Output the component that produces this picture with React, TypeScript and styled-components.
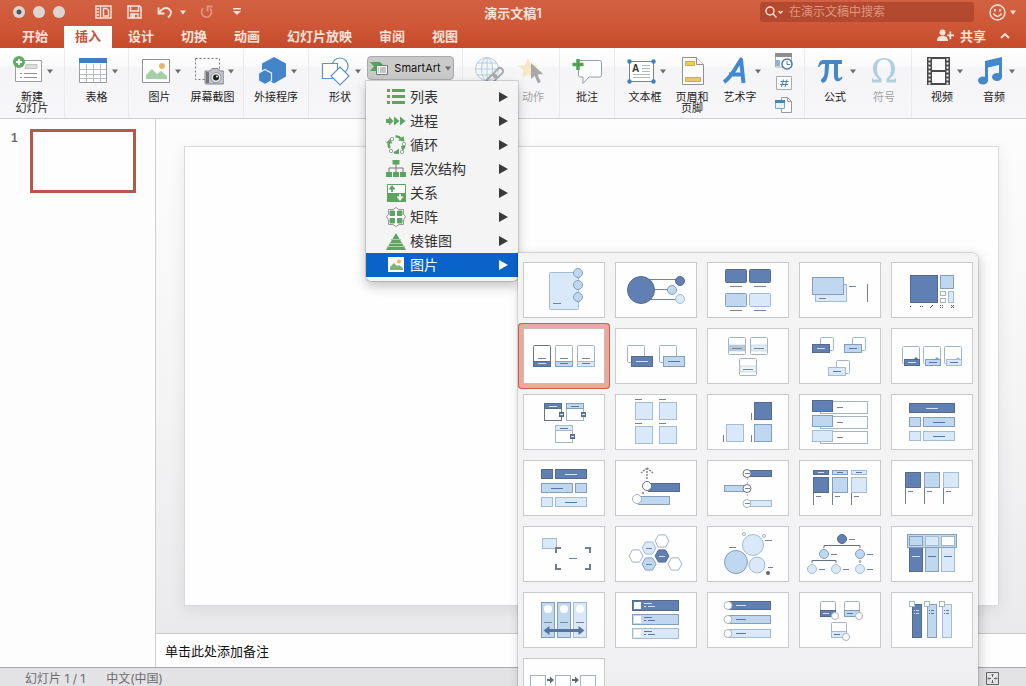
import React from "react";
import styled, { createGlobalStyle, css } from "styled-components";

const sans = `Inter, "Noto Sans CJK SC", "Liberation Sans", sans-serif`;

const Global = createGlobalStyle`
  * { box-sizing: border-box; }
  body { margin: 0; font-family: ${sans}; color: #222; overflow: hidden; }
  button { font: inherit; color: inherit; background: none; border: 0; padding: 0; margin: 0; }
  svg { display: block; }
`;

/* ---------- window frame ---------- */

const Window = styled.div`
  display: flex;
  flex-direction: column;
  height: 100vh;
  overflow: hidden;
  background: #fff;
`;

const Header = styled.header`
  flex: none;
  background: linear-gradient(#d16142, #ce5838 50%, #c64a2a);
  color: #fbe3db;
`;

const TitleBar = styled.div`
  display: grid;
  grid-template-columns: 1fr auto 1fr;
  align-items: start;
  height: 26px;
`;

const QuickAccess = styled.div`
  display: flex;
  align-items: center;
  height: 24px;
  padding-left: 13px;
`;

const Lights = styled.div`
  display: flex;
  gap: 8px;
  margin-right: 30px;
`;

const Light = styled.button<{ $dot?: boolean }>`
  width: 12px;
  height: 12px;
  border-radius: 50%;
  background: ${(p) => (p.$dot ? "radial-gradient(circle, #555 0 2px, #dcd5d3 3px)" : "#dcd5d3")};
`;

const QuickButton = styled.button<{ $gap: number; $faded?: boolean }>`
  margin-right: ${(p) => p.$gap}px;
  opacity: ${(p) => (p.$faded ? 0.4 : 1)};
`;

const Title = styled.h1`
  margin: 0;
  font-size: 13px;
  line-height: 26px;
  font-weight: 600;
`;

const TitleTools = styled.div`
  display: flex;
  justify-content: flex-end;
  align-items: center;
  gap: 15px;
  height: 24px;
  padding-right: 10px;
`;

const Search = styled.label`
  display: flex;
  align-items: center;
  gap: 5px;
  width: 214px;
  height: 20px;
  padding-left: 5px;
  border-radius: 3px;
  background: #b34a2f;
`;

const SearchInput = styled.input`
  flex: 1;
  min-width: 0;
  border: 0;
  padding: 0;
  background: none;
  font: 12px/18px ${sans};
  color: #fff;
  outline: none;
  &::placeholder { color: #dc9682; opacity: 1; }
`;

const Feedback = styled.button`
  display: flex;
  align-items: center;
  gap: 4px;
`;

const TabBar = styled.nav`
  display: flex;
  align-items: stretch;
  gap: 5px;
  height: 22px;
  padding: 0 16px 0 11px;
`;

const Tab = styled.button<{ $active?: boolean }>`
  padding: 0 11px 2px;
  font-size: 13px;
  line-height: 20px;
  font-weight: 600;
  ${(p) => p.$active && css`background: #fdfdfd; color: #c5523a;`}
`;

const Share = styled.button`
  display: flex;
  align-items: center;
  gap: 6px;
  margin-left: auto;
  margin-right: 9px;
  padding-bottom: 3px;
  font-size: 13px;
  line-height: 18px;
  font-weight: 600;
`;

const Collapse = styled.button`
  padding-bottom: 3px;
`;

/* ---------- ribbon ---------- */

const Ribbon = styled.div`
  flex: none;
  display: flex;
  height: 71px;
  background: linear-gradient(#fff, #fbfbfb 24%, #f5f4f6 30%, #f7f6f8);
  border-bottom: 1px solid #cfcdd0;
`;

const Group = styled.div`
  display: flex;
  flex: none;
  padding: 0 4px;
  border-right: 1px solid #ebeaec;
  &:last-child { border-right: 0; }
`;

const Tool = styled.button<{ $w: number; $disabled?: boolean }>`
  display: flex;
  flex-direction: column;
  align-items: center;
  justify-content: flex-start;
  gap: 6px;
  width: ${(p) => p.$w}px;
  padding-top: 8px;
  font-size: 11px;
  line-height: 11px;
  white-space: pre;
  color: ${(p) => (p.$disabled ? "#a3a2a4" : "#1c1c1c")};
`;

const ToolFace = styled.span<{ $arrow?: boolean }>`
  display: flex;
  align-items: center;
  gap: 4px;
  height: 30px;
  padding-left: ${(p) => (p.$arrow ? 2 : 0)}px;
`;

const SmallStack = styled.div`
  display: flex;
  flex-direction: column;
  align-items: center;
  gap: 6px;
  width: 33px;
  padding-top: 5px;
`;

const MenuAnchor = styled.div`
  position: relative;
  margin-right: 4px;
  padding-top: 8px;
`;

const SmartArtButton = styled.button`
  display: flex;
  align-items: center;
  justify-content: center;
  gap: 4px;
  width: 87px;
  height: 24px;
  border: 1px solid #a9a8aa;
  border-radius: 4px;
  background: #cbcacb;
  font-size: 11px;
  line-height: 16px;
  color: #111;
`;

/* ---------- menus ---------- */

const Menu = styled.div`
  position: absolute;
  z-index: 10;
  top: 33px;
  left: -1px;
  width: 152px;
  padding: 4px 0;
  border-radius: 0 0 5px 5px;
  background: #f5f4f5;
  box-shadow: 0 0 0 1px rgba(0, 0, 0, 0.13), 0 5px 12px rgba(0, 0, 0, 0.25);
`;

const MenuItem = styled.button<{ $active?: boolean }>`
  display: flex;
  align-items: center;
  gap: 4px;
  width: 100%;
  height: 24px;
  padding: 0 10px 0 20px;
  font-size: 14px;
  line-height: 22px;
  text-align: left;
  color: ${(p) => (p.$active ? "#fff" : "#333")};
  background: ${(p) => (p.$active ? "#0a63c9" : "none")};
`;

const MenuText = styled.span`
  flex: 1;
`;

const SubAnchor = styled.div`
  position: relative;
`;

const Gallery = styled.div`
  position: absolute;
  top: 0;
  left: 152px;
  display: grid;
  grid-template-columns: repeat(5, 82px);
  grid-auto-rows: 56px;
  gap: 10px;
  padding: 9px 5px 40px;
  border-radius: 0 6px 0 0;
  background: linear-gradient(#f5f4f5, #f3f2f4 75%, #e9e8ea);
  box-shadow: 0 0 0 1px rgba(0, 0, 0, 0.13), 2px 3px 12px rgba(0, 0, 0, 0.2);
`;

const Cell = styled.button<{ $selected?: boolean }>`
  border: 1px solid #cbcacb;
  background: #fefefe;
  overflow: hidden;
  ${(p) => p.$selected && css`box-shadow: 0 0 0 4px #eba99c, 0 0 0 5px #c9624d; border-color: #cfb9b4; border-radius: 1px;`}
`;

/* ---------- work area ---------- */

const Work = styled.div`
  flex: 1;
  display: flex;
  min-height: 0;
`;

const Slides = styled.aside`
  flex: none;
  display: flex;
  align-items: flex-start;
  gap: 12px;
  width: 156px;
  padding: 10px 0 0 11px;
  border-right: 1px solid #cfced1;
  background: #fdfdfd;
`;

const SlideNumber = styled.span`
  width: 7px;
  font: 700 12px/18px "Liberation Sans", sans-serif;
  color: #6d6d6d;
`;

const SlideThumb = styled.button`
  width: 106px;
  height: 64px;
  border: 3px solid #b4594a;
  background: #fefefe;
`;

const Editor = styled.main`
  flex: 1;
  display: flex;
  flex-direction: column;
  min-width: 0;
`;

const Canvas = styled.div`
  flex: 1;
  display: flex;
  padding: 27px 27px 27px 28px;
  background: linear-gradient(#fdfdfd, #f6f5f6 50%, #eae9eb);
`;

const Slide = styled.div`
  flex: 1;
  border: 1px solid #dad9dc;
  background: #fefefe;
  box-shadow: 0 4px 14px rgba(60, 60, 80, 0.1);
`;

const Notes = styled.p`
  flex: none;
  height: 34px;
  margin: 0;
  padding: 7px 9px;
  border-top: 1px solid #c9c8cc;
  background: #fefefe;
  font-size: 13px;
  line-height: 20px;
  color: #111;
`;

const Status = styled.footer`
  flex: none;
  display: flex;
  align-items: center;
  gap: 21px;
  height: 19px;
  padding: 3px 27px 0 25px;
  border-top: 1px solid #a9a8ab;
  background: #e3e2e4;
  font-size: 12px;
  line-height: 16px;
  color: #6c6c6e;
`;

const FitButton = styled.button`
  margin-left: auto;
`;

/* ---------- small glyphs ---------- */

const Caret = ({ color = "#6b6b6b" }: { color?: string }) => (
  <svg width="6" height="5" viewBox="0 0 6 5"><path d="M0 0.5h6L3 4.5z" fill={color} /></svg>
);

const hex = (cx: number, cy: number, r: number, k = 0.87) =>
  [[-1, 0], [-0.5, -k], [0.5, -k], [1, 0], [0.5, k], [-0.5, k]].map(([a, b]) => `${cx + a * r},${cy + b * r}`).join(" ");

const ToolIcon = ({ children, w = 30 }: { children: React.ReactNode; w?: number }) => (
  <svg width={w} height="30" viewBox={`0 0 ${w} 30`} fill="none">{children}</svg>
);

const icons = {
  newSlide: (
    <ToolIcon>
      <path d="M2.5 4.500h26v21h-26z" fill="#fdfdfd" stroke="#9b9da0" />
      <path d="M13 8.500h11v4H12z" fill="#ddd" stroke="#c4c4c4" />
      <path d="M7 17.500h2m2 0h13M7 21.500h2m2 0h13" stroke="#8e9093" />
      <circle cx="6" cy="6" r="6" fill="#5fae63" />
      <path d="M6 3v6M3 6h6" stroke="#fff" strokeWidth="2" />
    </ToolIcon>
  ),
  table: (
    <ToolIcon>
      <path d="M1.500 2.500h27v24h-27z" fill="#fff" stroke="#9a9da2" />
      <path d="M1 2h28v5H1z" fill="#3f7fc0" />
      <path d="M8.500 8v18M15.500 8v18M22.500 8v18M2 13.500h26M2 18.500h26M2 22.500h26" stroke="#b9bcc0" />
    </ToolIcon>
  ),
  picture: (
    <ToolIcon>
      <path d="M1.500 3.500h27v23h-27z" fill="#fdfdfd" stroke="#8e9297" />
      <path d="M5 23v-4l6-6 5 5 4-3 6 5v3z" fill="#a5cfa4" />
      <circle cx="21" cy="10" r="3" fill="#e9b765" />
    </ToolIcon>
  ),
  screenshot: (
    <ToolIcon>
      <path d="M1.500 2.500h24v21h-24z" stroke="#777" strokeDasharray="2 2" />
      <path d="M11 15h5l2-2.500h6l2 2.500h3a1 1 0 0 1 1 1v11a1 1 0 0 1-1 1H12a1 1 0 0 1-1-1z" fill="#c1c2c5" stroke="#85878b" />
      <path d="M12 16h3v11h-3z" fill="#75777b" />
      <circle cx="22" cy="21.500" r="5" fill="#e9e9ea" stroke="#98999c" />
      <circle cx="22" cy="21.500" r="3" fill="#222" /><circle cx="23" cy="20.500" r="1" fill="#fff" />
    </ToolIcon>
  ),
  addins: (
    <ToolIcon>
      <path d="M17 1l12 6.500v13L17 27.500 5 20.500v-13z" fill="#4485c9" />
      <path d="M8 13.500l6.500 3.700v7.500L8 28.500l-6.500-3.800v-7.500z" fill="#4485c9" stroke="#e8f0f9" strokeWidth="1.200" />
    </ToolIcon>
  ),
  shapes: (
    <ToolIcon>
      <circle cx="19" cy="10" r="8" fill="#fff" stroke="#5b93cc" strokeWidth="1.200" />
      <path d="M1.500 7.500h15v15h-15z" fill="#fff" stroke="#5b93cc" strokeWidth="1.200" />
      <path d="M19 11l9 9-9 9-9-9z" fill="#fff" stroke="#5b93cc" strokeWidth="1.200" />
    </ToolIcon>
  ),
  link: (
    <ToolIcon>
      <g stroke="#b5cdde"><circle cx="13" cy="13" r="11.500" fill="#f3f7fa" /><ellipse cx="13" cy="13" rx="5.500" ry="11.500" /><path d="M1.500 13h23M3 7h20M3 19h20M13 1.500v23" /></g>
      <g transform="rotate(-45 21 20)" stroke="#a9abae" strokeWidth="2"><rect x="11" y="17" width="11" height="6" rx="3" /><rect x="20" y="17" width="11" height="6" rx="3" /></g>
    </ToolIcon>
  ),
  action: (
    <ToolIcon>
      <path d="M10 2l3 7 7 .6-5.500 4.800L16 22l-6-4-6 4 1.600-7.600L0 9.600 7 9z" fill="#f6e7c5" />
      <path d="M13 7l12 11-5.500.5 3.300 7.500-3 1.300-3.200-7.500L13 23z" fill="#a9a8a9" />
    </ToolIcon>
  ),
  comment: (
    <ToolIcon>
      <path d="M7 4.500h20.500a2 2 0 0 1 2 2V19a2 2 0 0 1-2 2H17l-6 6.500V21H8.500a2 2 0 0 1-2-2V6" fill="#fdfdfd" stroke="#8fa0ab" />
      <path d="M6 3v11M.5 8.500h11" stroke="#4ea453" strokeWidth="3.500" />
    </ToolIcon>
  ),
  textbox: (
    <ToolIcon>
      <path d="M3.500 5.500h24v20h-24z" fill="#fff" stroke="#7f8489" />
      <text x="6" y="16" fontFamily="Liberation Sans" fontWeight="700" fontSize="10" fill="#333">A</text>
      <path d="M16 9.500h8M16 12.500h8M16 15.500h8M7 18.500h17M7 21.500h17" stroke="#b4b6b8" />
      {[[3.500, 5.500], [27.500, 5.500], [3.500, 25.500], [27.500, 25.500]].map(([x, y]) => <circle key={`${x}${y}`} cx={x} cy={y} r="2.200" fill="#3d7fc4" />)}
    </ToolIcon>
  ),
  headerFooter: (
    <ToolIcon>
      <path d="M5.500 1.500h14l7 7v20h-21z" fill="#fdfdfd" stroke="#8f9194" />
      <path d="M19.500 1.500v7h7" stroke="#8f9194" fill="#fff" />
      <path d="M8.500 5.500h9v4h-9zM8.500 21.500h15v4h-15z" fill="#ecc95f" stroke="#d1ad48" />
    </ToolIcon>
  ),
  wordart: (
    <ToolIcon>
      <path d="M3 26C10 22 16 10 20 3.500L22.500 27M8 18.500h13.500" stroke="#4389cf" strokeWidth="4" strokeLinejoin="round" />
    </ToolIcon>
  ),
  pi: (
    <ToolIcon>
      <path d="M2 11c1-6 3-7 6-7h18v4H8c-3 0-4 1-4.500 3zM9 8h4c0 7-1 13-3 17-2 2.500-5 2-5-.5 0-2 3-2.500 3.500-7zM18 8h4v12c0 3 2 3 3.500.5l1 .8c-1.500 5-8.500 6-8.500-1z" fill="#4288ca" />
    </ToolIcon>
  ),
  omega: (
    <ToolIcon>
      <path d="M3 26.500v-5l1.500 2H10c-4-3-6-6-6-11C4 6 8.500 2 15 2s11 4 11 10.500c0 5-2 8-6 11h5.500l1.500-2v5h-9.500v-4c3-2 4.500-5 4.500-10 0-5-2.500-9-7-9s-7 4-7 9c0 5 1.500 8 4.500 10v4z" fill="#b0cfe0" />
    </ToolIcon>
  ),
  video: (
    <ToolIcon>
      <path d="M4 1h23v28H4z" fill="#4a4a4c" />
      <path d="M9 3h13v11H9zM9 16h13v11H9z" fill="#fafafa" />
      <path d="M6.500 2.500v26M24.500 2.500v26" stroke="#fafafa" strokeWidth="2" strokeDasharray="2 2" />
    </ToolIcon>
  ),
  audio: (
    <ToolIcon>
      <path d="M10 5L27 1v20h-3V9l-11 2.500V25h-3z" fill="#4288ca" />
      <ellipse cx="8" cy="24.500" rx="5" ry="4" fill="#4288ca" /><ellipse cx="22" cy="21" rx="5" ry="4" fill="#4288ca" />
    </ToolIcon>
  ),
};

const DateIcon = () => (
  <svg width="18" height="17" viewBox="0 0 18 17" fill="none">
    <path d="M.5 3h16v11H.5z" fill="#fff" stroke="#aaa" /><path d="M0 0h17v4H0z" fill="#8e8e90" />
    <path d="M1 7h4v6H1z" fill="#8ab6dd" /><circle cx="12" cy="11" r="5" fill="#fff" stroke="#477ba7" strokeWidth="1.500" /><path d="M12 8v3.500h3" stroke="#477ba7" />
  </svg>
);
const NumberIcon = () => (
  <svg width="16" height="15" viewBox="0 0 16 15" fill="none">
    <path d="M.5.5h15v13H.5z" fill="#fdfdfd" stroke="#aaa" /><path d="M7.500 3.500l-2 7.500M11 3.500L9 11M4.500 5.500h8M4 8.500h8" stroke="#4a84b5" />
  </svg>
);
const ObjectIcon = () => (
  <svg width="17" height="17" viewBox="0 0 17 17" fill="none">
    <path d="M6.500.5h6l4 4v11h-10z" fill="#fdfdfd" stroke="#999" /><path d="M12.500.5v4h4" stroke="#999" />
    <path d="M.5 3.500h9v8h-9z" fill="#e8f1f7" stroke="#7fa9c4" /><path d="M0 3h10v3H0z" fill="#4187b5" />
  </svg>
);

/* ---------- menu icons ---------- */

const G = "#5ba560";
const menuIcon = (body: React.ReactNode) => <svg width="20" height="20" viewBox="0 0 20 20" fill="none">{body}</svg>;

const menuRows = [
  { name: "列表", icon: menuIcon(<path d="M1 3.500h3M6 3.500h13M1 9.500h3M6 9.500h13M1 15.500h3M6 15.500h13" stroke={G} strokeWidth="3" />) },
  { name: "进程", icon: menuIcon(<path d="M0 8h3V5.500l4.500 4.500L3 14.500V12H0zM8 5.500l5.500 4.500L8 14.500zM14 5.500l5.500 4.500-5.500 4.500z" fill={G} />) },
  { name: "循环", icon: menuIcon(<>
    <path d="M9.500 1.500q3.500-.5 5 2M18 9.500q0 3.500-1.500 5M12 17.500q-2.500.5-4-.5M4 13q-2-2-1-6" stroke={G} strokeWidth="2.500" />
    <path d="M12 5.500l6.500 1-1-5.500zM15 11l5 .5-4 3.500zM13 13.500v6l-4-3zM0 8l4-4 2.500 4.500z" fill={G} />
    <g stroke="#888" strokeWidth=".8" fill="#fff"><circle cx="6" cy="4" r="1.700" /><circle cx="18" cy="9" r="1.700" /><circle cx="16" cy="17" r="1.700" /><circle cx="5" cy="16" r="1.700" /></g></>) },
  { name: "层次结构", icon: menuIcon(<><path d="M10 5v8M3 13V9h14v4" stroke="#777" /><path d="M6.500 1h7v4.500h-7zM0 13h6v5H0zM7 13h6v5H7zM14 13h6v5h-6z" fill={G} /></>) },
  { name: "关系", icon: menuIcon(<><path d="M1.500 1.500h18v17h-18z" fill="#fff" stroke={G} /><path d="M1 10h19v9H1z" fill={G} /><path d="M6 9V4M3.500 6.500L6 3.500l2.500 3" stroke={G} strokeWidth="1.800" /><path d="M14 11v5M11.500 13.500l2.500 3 2.500-3" stroke="#fff" strokeWidth="1.800" /></>) },
  { name: "矩阵", icon: menuIcon(<><path d="M10 .5l3 2h4.500v4.500l2 3-2 3v4.500H13l-3 2-3-2H2.500V13l-2-3 2-3V2.500H7z" stroke="#999" fill="#fff" /><path d="M4 4h4.500v4.500H4zM11.500 4H16v4.500h-4.500zM4 11.500h4.500V16H4zM11.500 11.500H16V16h-4.500z" fill={G} stroke={G} strokeLinejoin="round" /></>) },
  { name: "棱锥图", icon: menuIcon(<><path d="M10 2l10 17H0z" fill={G} /><path d="M5 8.500h10M3 12.500h14M1 15.500h18" stroke="#a9d1aa" /></>) },
];

const PictureSmall = () => menuIcon(<>
  <path d="M2 2h16v15H2z" fill="#fff" /><path d="M4 15v-3l4-4 3 3 2-1 4 3v2z" fill="#7fb07e" /><circle cx="13" cy="6.500" r="2" fill="#eab375" />
</>);

/* ---------- gallery drawings ---------- */

type Tone = "d" | "m" | "l" | "w" | "k";
const tones: Record<Tone, [string, string]> = {
  d: ["#6080b4", "#566a8c"],
  m: ["#bfd8f0", "#829fbd"],
  l: ["#d9e9f9", "#a3bcd3"],
  w: ["#ffffff", "#a5b4c1"],
  k: ["#ffffff", "#6a747f"],
};
const DML: Tone[] = ["d", "m", "l"];

const R = ({ x, y, w, h, t = "w", r = 0 }: { x: number; y: number; w: number; h: number; t?: Tone; r?: number }) => (
  <rect x={x + 0.5} y={y + 0.5} width={w - 1} height={h - 1} rx={r} fill={tones[t][0]} stroke={tones[t][1]} />
);
const C = ({ x, y, r, t = "w" }: { x: number; y: number; r: number; t?: Tone }) => (
  <circle cx={x} cy={y} r={r - 0.5} fill={tones[t][0]} stroke={tones[t][1]} />
);
const H = ({ x, y, w, c = "#76849a" }: { x: number; y: number; w: number; c?: string }) => (
  <path d={`M${x} ${y + 0.5}h${w}`} stroke={c} />
);
const V = ({ x, y, h }: { x: number; y: number; h: number }) => <path d={`M${x + 0.5} ${y}v${h}`} stroke="#76808c" />;
const onTone = (t: Tone) => (t === "d" ? "#d5e2f2" : "#5878a4");
const X = ({ x, y, t = "w" }: { x: number; y: number; t?: Tone }) => <polygon points={hex(x, y, 7)} fill={tones[t][0]} stroke={tones[t][1]} />;

const drawings: React.ReactNode[] = [
  <><R x={26} y={10} w={30} h={38} t="l" r={1} /><H x={30} y={41} w={8} />{[11, 23, 35].map((y) => <C key={y} x={55} y={y} r={5} t="m" />)}</>,
  <><H x={32} y={17} w={30} /><H x={38} y={27} w={16} /><H x={32} y={37} w={30} /><C x={26} y={28} r={14} t="d" /><C x={65} y={19} r={5} t="d" /><C x={57} y={28} r={5} t="m" /><C x={65} y={37} r={5} t="l" /></>,
  <>{([[18, 7, "d"], [42, 7, "d"], [18, 31, "m"], [42, 31, "l"]] as [number, number, Tone][]).map(([x, y, t]) => <g key={`${x}${y}`}><R x={x} y={y} w={22} h={14} t={t} r={1} /><H x={x + 5} y={y + 17} w={12} /></g>)}</>,
  <><R x={16} y={22} w={32} h={18} t="l" /><R x={13} y={15} w={32} h={18} t="m" /><H x={20} y={36} w={7} /><H x={50} y={24} w={7} /><V x={68} y={22} h={18} /></>,
  <><R x={19} y={13} w={28} h={28} t="d" /><R x={49} y={13} w={14} h={14} t="m" /><R x={49} y={29} w={6} h={5} /><R x={49} y={36} w={6} h={5} /><R x={57} y={29} w={6} h={12} t="l" /><path d="M19 44.500h1M29 44.500h1M31 44.500h1M39 45.500h1M40 44.500h1M41 43.500h1M49 43.500h1M51 43.500h1M49 45.500h1M51 45.500h1M60 43.500h1M62 43.500h1M61 44.500h1M60 45.500h1M62 45.500h1" stroke="#555" /></>,
  <>{DML.map((t, i) => <g key={t}><R x={10 + i * 22} y={17} w={18} h={22} t={i ? "w" : "k"} r={1} /><R x={10 + i * 22} y={33} w={18} h={6} t={t} /><H x={15 + i * 22} y={30} w={8} /><H x={15 + i * 22} y={35} w={8} c={onTone(t)} /></g>)}</>,
  <>{([[12, "d"], [44, "m"]] as [number, Tone][]).map(([x, t]) => <g key={x}><R x={x} y={17} w={18} h={18} r={1} /><R x={x + 4} y={28} w={22} h={11} t={t} /><H x={x + 9} y={33} w={12} c={onTone(t)} /></g>)}</>,
  <>{([[21, 9, "#b8c8dc"], [43, 9, "#e0edf9"], [32, 30, "#edf4fb"]] as [number, number, string][]).map(([x, y, c]) => <g key={x}><R x={x} y={y} w={18} h={18} r={1} /><rect x={x + 1} y={y + 8} width={16} height={6} fill={c} stroke="#b9c8d4" strokeWidth={0.6} /><H x={x + 4} y={y + 11} w={10} /></g>)}</>,
  <>{([[21, 9, "d"], [53, 9, "m"], [37, 32, "l"]] as [number, number, Tone][]).map(([x, y, t]) => <g key={x}><R x={x} y={y} w={14} h={14} r={1} /><R x={x - 8} y={y + 7} w={18} h={9} t={t} /><H x={x - 3} y={y + 11} w={8} c={onTone(t)} /></g>)}</>,
  <>{DML.map((t, i) => <g key={t}><R x={11 + i * 21} y={18} w={18} h={18} r={1} /><path d={`M${23 + i * 21} 31l2-2 2 2z`} fill={tones[t][1]} /><R x={13 + i * 21} y={31} w={16} h={7} t={t} /><H x={17 + i * 21} y={34} w={8} c={onTone(t)} /></g>)}</>,

  <>{([[21, 9, "d"], [43, 9, "m"], [32, 31, "l"]] as [number, number, Tone][]).map(([x, y, t]) => <g key={x}><R x={x} y={y} w={18} h={18} t={t === "d" ? "k" : "w"} /><R x={x} y={y} w={18} h={6} t={t} /><H x={x + 5} y={y + 3} w={8} c={onTone(t)} /><R x={x + 15} y={y + 9} w={5} h={5} t="d" /><H x={x + 16} y={y + 11} w={3} c="#dbe6f4" /></g>)}</>,
  <>{[[20, 8], [44, 8], [20, 32], [44, 32]].map(([x, y]) => <g key={`${x}${y}`}><H x={x} y={y - 3} w={7} /><R x={x} y={y} w={18} h={18} t="l" /></g>)}</>,
  <>{([[47, 8, "d"], [19, 30, "l"], [47, 30, "m"]] as [number, number, Tone][]).map(([x, y, t]) => <g key={`${x}${y}`}><R x={x} y={y} w={18} h={18} t={t} /><V x={x - 3} y={y + 11} h={7} /></g>)}</>,
  <>{DML.map((t, i) => <g key={t}><R x={21} y={7 + i * 15} w={48} h={13} /><R x={13} y={6 + i * 15} w={21} h={12} t={t} /><H x={38} y={13 + i * 15} w={6} /></g>)}</>,
  <><R x={18} y={9} w={46} h={10} t="d" /><H x={35} y={14} w={12} c="#d5e2f2" />{(["m", "l"] as Tone[]).map((t, i) => <g key={t}><R x={18} y={23 + i * 14} w={12} h={10} t={t} /><R x={32} y={23 + i * 14} w={32} h={10} t={t} /><H x={42} y={28 + i * 14} w={12} c="#5878a4" /></g>)}</>,

  <>{DML.map((t, i) => { const flip = i === 1; return <g key={t}><R x={flip ? 52 : 18} y={9 + i * 14} w={12} h={10} t={t} /><R x={flip ? 18 : 32} y={9 + i * 14} w={32} h={10} t={t} /><H x={flip ? 28 : 42} y={14 + i * 14} w={12} c={onTone(t)} /></g>; })}</>,
  <><path d="M32 8v12M32 8l-6 5M32 8l6 5" stroke="#888" strokeWidth={1.500} strokeDasharray="2 1" /><R x={33} y={23} w={32} h={9} t="d" /><C x={32} y={26} r={5} t="k" /><path d="M27 33h2" stroke="#999" strokeWidth={2} /><R x={23} y={36} w={32} h={9} t="m" /><C x={22} y={39} r={5} /></>,
  <><path d="M40.500 18v20" stroke="#bbb" strokeDasharray="2 2" />{DML.map((t, i) => <g key={t}><R x={i === 1 ? 17 : 42} y={10 + i * 15} w={i === 1 ? 22 : 23} h={7} t={t} /><C x={40} y={13.5 + i * 15} r={4.5} t={i === 2 ? "w" : "k"} /><H x={38} y={13 + i * 15} w={5} /></g>)}</>,
  <>{DML.map((t, i) => { const x = 14 + i * 19; return <g key={t}><R x={x} y={10} w={16} h={5} t={t} /><H x={x + 5} y={12} w={6} c={onTone(t)} /><R x={x} y={17} w={16} h={16} t={t} /><V x={x} y={33} h={12} /><H x={x + 3} y={36} w={5} /></g>; })}</>,
  <>{DML.map((t, i) => { const x = 14 + i * 19; return <g key={t}><R x={x} y={12} w={16} h={16} t={t} /><V x={x} y={28} h={16} /><H x={x + 3} y={31} w={5} /></g>; })}</>,

  <><R x={19} y={12} w={15} h={11} t="l" /><path d="M33 27v-5h5M62 22h5v5M33 38v5h5M62 43h5v-5" stroke="#737d88" strokeWidth={2} /><H x={46} y={32} w={8} /></>,
  <><X x={47} y={15} /><X x={34} y={22} t="l" /><X x={21} y={30} /><X x={47} y={30} t="d" /><X x={34} y={38} t="m" /><X x={60} y={38} /><H x={31} y={22} w={6} /><H x={44} y={30} w={6} c="#d5e2f2" /><H x={31} y={38} w={6} /></>,
  <><C x={29} y={36} r={12} t="m" /><C x={46} y={19} r={11} t="l" /><C x={50} y={39} r={8.500} t="l" /><C x={37} y={8} r={2} /><C x={57} y={10} r={2} /><circle cx={61} cy={47} r={2} fill="#5d6775" /><H x={22} y={21} w={7} /><H x={58} y={14} w={7} /><H x={61} y={41} w={5} /></>,
  <><path d="M25 22v-2.500h36V22M13 37v-2.500h24V37M61 34v3" stroke="#66707f" />{([[43, 13, "d"], [25, 28, "m"], [61, 28, "m"], [13, 43, "l"], [37, 43, "l"], [61, 43, "l"]] as [number, number, Tone][]).map(([x, y, t]) => <g key={`${x}-${y}`}><C x={x} y={y} r={5} t={t} /><H x={x + 7} y={y} w={6} /></g>)}</>,
  <>{DML.map((t, i) => <g key={t}><R x={18 + i * 16} y={20} w={14} h={26} t={t} /><H x={21 + i * 16} y={30} w={8} c={onTone(t)} /></g>)}<R x={16} y={8} w={50} h={14} t="m" /><R x={18} y={10} w={14} h={10} t="m" /><R x={34} y={10} w={14} h={10} t="l" /><R x={50} y={10} w={14} h={10} /></>,

  <>{(["m", "m", "l"] as Tone[]).map((t, i) => <g key={i}><R x={18 + i * 16} y={10} w={14} h={36} t={t} /><circle cx={25 + i * 16} cy={17} r={4} fill="#fff" /><H x={21 + i * 16} y={30} w={8} /></g>)}<path d="M20.500 38.500l6-4.500v3h29v-3l6 4.500-6 4.500v-3h-29v3z" fill="#5873a0" /></>,
  <>{DML.map((t, i) => { const y = 8 + i * 14; return <g key={t}><R x={17} y={y} w={47} h={11} t={t} /><path d={`M19 ${y + 2}h7v7h-7z`} fill="#fff" /><H x={29} y={y + 3} w={8} c={onTone(t)} /><H x={29} y={y + 6} w={2} c={onTone(t)} /><H x={33} y={y + 6} w={7} c={onTone(t)} /></g>; })}</>,
  <>{DML.map((t, i) => { const y = 9 + i * 14; return <g key={t}><R x={21} y={y} w={43} h={9} t={t} /><C x={21} y={y + 4.5} r={4.5} /><H x={29} y={y + 4} w={10} c={onTone(t)} /></g>; })}</>,
  <>{([[21, 9, "d"], [45, 9, "m"], [32, 30, "l"]] as [number, number, Tone][]).map(([x, y, t]) => <g key={x}><R x={x} y={y} w={16} h={16} r={1} /><R x={x} y={y + 9} w={16} h={7} t={t} /><H x={x + 3} y={y + 12} w={6} c={onTone(t)} /><C x={x + 15} y={y + 15} r={4} /></g>)}</>,
  <>{DML.map((t, i) => { const x = 21 + i * 15; return <g key={t}><R x={x} y={12} w={10} h={34} t={t} /><R x={x - 3} y={9} w={6} h={6} /><path d={`M${x + 2} 18.500h1m1 0h3M${x + 2} 21.500h1m1 0h3`} stroke={onTone(t)} /></g>; })}</>,

  <>{[7, 32, 57].map((x) => <R key={x} x={x} y={17} w={16} h={16} />)}{[24, 49].map((x) => <path key={x} d={`M${x} 21h3v-2.500l4 3.500-4 3.500V23h-3z`} fill="#5e6b76" />)}</>,
];

/* ---------- page ---------- */

type ToolProps = { icon: React.ReactNode; label?: string; name?: string; w: number; arrow?: boolean; disabled?: boolean };
const RibbonTool = ({ icon, label, name, w, arrow, disabled }: ToolProps) => (
  <Tool type="button" $w={w} $disabled={disabled} aria-label={name}>
    <ToolFace $arrow={arrow}>{icon}{arrow && <Caret />}</ToolFace>
    {label}
  </Tool>
);

const tabs = ["开始", "插入", "设计", "切换", "动画", "幻灯片放映", "审阅", "视图"];

export default function App() {
  return (
    <Window>
      <Global />
      <Header>
        <TitleBar>
          <QuickAccess>
            <Lights><Light $dot aria-label="关闭" /><Light aria-label="最小化" /><Light aria-label="缩放" /></Lights>
            <QuickButton $gap={15} aria-label="版式">
              <svg width="17" height="14" viewBox="0 0 17 14" fill="none" stroke="#fbe3db" strokeWidth="1.400"><path d="M1 1h15v12H1zM5.500 1v12M8.500 3.500h3l2 2v5.500h-5z" /><path d="M2 4h2M2 7h2M2 10h2" /></svg>
            </QuickButton>
            <QuickButton $gap={15} aria-label="保存">
              <svg width="15" height="14" viewBox="0 0 15 14" fill="none" stroke="#fbe3db" strokeWidth="1.500"><path d="M1 1h11.500L14 2.500V13H1zM3.500 1v5h8V1M4 13V9h7v4" /><path d="M5 9.500h3V13H5z" fill="#fbe3db" stroke="none" /></svg>
            </QuickButton>
            <QuickButton $gap={7} aria-label="撤消">
              <svg width="16" height="14" viewBox="0 0 16 14" fill="none" stroke="#fbe3db" strokeWidth="1.800"><path d="M1.500 2.500v6h6M2 8c3-5 7-6 10-4 3 2.500 2.500 5.500-1 8.500" /></svg>
            </QuickButton>
            <QuickButton $gap={14} aria-label="撤消列表"><Caret color="#fbe3db" /></QuickButton>
            <QuickButton $gap={20} $faded aria-label="重做">
              <svg width="13" height="14" viewBox="0 0 13 14" fill="none" stroke="#fbe3db" strokeWidth="1.800"><path d="M3 3.500a5 5 0 1 0 7 0M7.500 6.500v-5h5" /></svg>
            </QuickButton>
            <QuickButton $gap={0} aria-label="自定义工具栏">
              <svg width="8" height="8" viewBox="0 0 8 8"><path d="M0 0h8v1.500H0zM0 3h8L4 7z" fill="#fbe3db" /></svg>
            </QuickButton>
          </QuickAccess>
          <Title>演示文稿1</Title>
          <TitleTools>
            <Search>
              <svg width="19" height="12" viewBox="0 0 19 12" fill="none" stroke="#fbe3db" strokeWidth="1.400"><circle cx="5" cy="5" r="4" /><path d="M8 8l3.500 3.500M13.500 5l2 2 2-2" /></svg>
              <SearchInput type="search" placeholder="在演示文稿中搜索" aria-label="在演示文稿中搜索" />
            </Search>
            <Feedback aria-label="反馈">
              <svg width="17" height="17" viewBox="0 0 17 17" fill="none" stroke="#fbe3db" strokeWidth="1.400"><circle cx="8.500" cy="8.500" r="7.500" /><path d="M4.500 9.500q4 6 8 0" /><path d="M6 5v2.500M11 5v2.500" strokeWidth="1.600" /></svg>
              <Caret color="#fbe3db" />
            </Feedback>
          </TitleTools>
        </TitleBar>
        <TabBar>
          {tabs.map((t) => <Tab key={t} type="button" $active={t === "插入"}>{t}</Tab>)}
          <Share type="button">
            <svg width="17" height="13" viewBox="0 0 17 13" fill="#fbe3db"><circle cx="5.500" cy="3.500" r="3" /><path d="M0 12c0-4 2-5 5.500-5s5.500 1 5.500 5z" /><path d="M12.500 2.500h1.700v3H17v1.700h-2.800v3h-1.700v-3h-2.300V5.500h2.300z" /></svg>
            共享
          </Share>
          <Collapse type="button" aria-label="折叠功能区">
            <svg width="10" height="7" viewBox="0 0 10 7" fill="none" stroke="#fbe3db" strokeWidth="1.800"><path d="M1 6l4-4 4 4" /></svg>
          </Collapse>
        </TabBar>
      </Header>

      <Ribbon>
        <Group><RibbonTool w={56} icon={icons.newSlide} label={"新建\n幻灯片"} arrow /></Group>
        <Group><RibbonTool w={55} icon={icons.table} label="表格" arrow /></Group>
        <Group>
          <RibbonTool w={53} icon={icons.picture} label="图片" arrow />
          <RibbonTool w={53} icon={icons.screenshot} label="屏幕截图" arrow />
        </Group>
        <Group><RibbonTool w={56} icon={icons.addins} label="外接程序" arrow /></Group>
        <Group>
          <RibbonTool w={54} icon={icons.shapes} label="形状" arrow />
          <MenuAnchor>
            <SmartArtButton type="button" aria-haspopup="menu" aria-expanded="true">
              <svg width="20" height="14" viewBox="0 0 20 14" fill="none">
                <path d="M0 1h10l4 4-4 5H0l4-4.500z" fill="#4fa556" />
                <path d="M6.500 4.500h11v9h-11z" fill="#fff" stroke="#777" /><path d="M8 7h1m1 0h6M8 9h1m1 0h6M8 11h1m1 0h6" stroke="#888" />
              </svg>
              SmartArt
              <Caret />
            </SmartArtButton>
            <Menu role="menu">
              {menuRows.map((row) => (
                <MenuItem key={row.name} type="button" role="menuitem">
                  {row.icon}<MenuText>{row.name}</MenuText>
                  <svg width="9" height="10" viewBox="0 0 9 10"><path d="M0 0l9 5-9 5z" fill="#3a3a3a" /></svg>
                </MenuItem>
              ))}
              <SubAnchor>
                <MenuItem type="button" role="menuitem" $active>
                  <PictureSmall /><MenuText>图片</MenuText>
                  <svg width="9" height="10" viewBox="0 0 9 10"><path d="M0 0l9 5-9 5z" fill="#fff" /></svg>
                </MenuItem>
                <Gallery role="menu">
                  {drawings.map((d, i) => (
                    <Cell key={i} type="button" $selected={i === 5} aria-label={`图片版式 ${i + 1}`}>
                      <svg width="80" height="54" viewBox="1 1 80 54" fill="none">{d}</svg>
                    </Cell>
                  ))}
                </Gallery>
              </SubAnchor>
            </Menu>
          </MenuAnchor>
        </Group>
        <Group>
          <RibbonTool w={44} icon={icons.link} name="超链接" disabled />
          <RibbonTool w={44} icon={icons.action} label="动作" disabled />
        </Group>
        <Group><RibbonTool w={46} icon={icons.comment} label="批注" /></Group>
        <Group>
          <RibbonTool w={52} icon={icons.textbox} label="文本框" arrow />
          <RibbonTool w={42} icon={icons.headerFooter} label={"页眉和\n页脚"} />
          <RibbonTool w={54} icon={icons.wordart} label="艺术字" arrow />
          <SmallStack>
            <button type="button" aria-label="日期和时间"><DateIcon /></button>
            <button type="button" aria-label="幻灯片编号"><NumberIcon /></button>
            <button type="button" aria-label="对象"><ObjectIcon /></button>
          </SmallStack>
        </Group>
        <Group>
          <RibbonTool w={52} icon={icons.pi} label="公式" arrow />
          <RibbonTool w={46} icon={icons.omega} label="符号" disabled />
        </Group>
        <Group>
          <RibbonTool w={52} icon={icons.video} label="视频" arrow />
          <RibbonTool w={52} icon={icons.audio} label="音频" arrow />
        </Group>
      </Ribbon>

      <Work>
        <Slides>
          <SlideNumber>1</SlideNumber>
          <SlideThumb type="button" aria-label="幻灯片 1" />
        </Slides>
        <Editor>
          <Canvas><Slide /></Canvas>
          <Notes>单击此处添加备注</Notes>
        </Editor>
      </Work>

      <Status>
        <span>幻灯片 1 / 1</span>
        <span>中文(中国)</span>
        <FitButton type="button" aria-label="适应窗口">
          <svg width="13" height="13" viewBox="0 0 13 13" fill="none" stroke="#666"><path d="M.5.5h12v12H.5z" /><path d="M6.500 2v3M6.500 8v3M2 6.500h3M8 6.500h3M5.500 3l1-1 1 1M5.500 10l1 1 1-1M3 5.500l-1 1 1 1M10 5.500l1 1-1 1" /></svg>
        </FitButton>
      </Status>
    </Window>
  );
}
